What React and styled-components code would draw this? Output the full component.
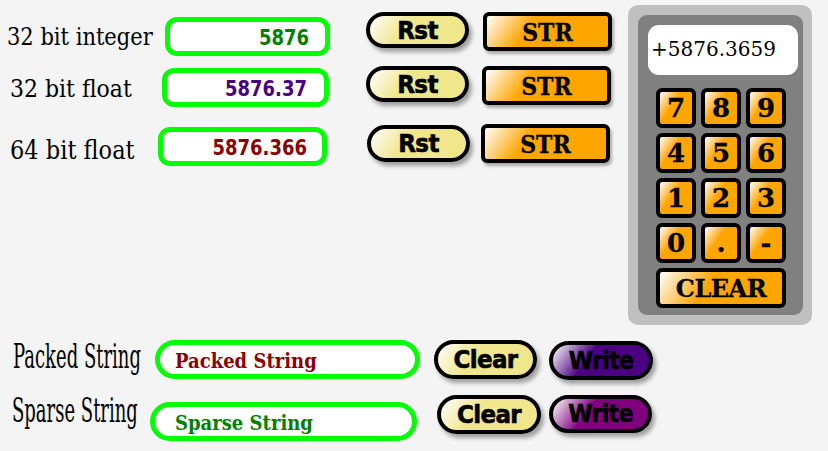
import React from 'react'
import styled, { createGlobalStyle } from 'styled-components'

const GlobalStyle = createGlobalStyle`
  html, body {
    margin: 0;
    padding: 0;
    background: #f4f4f4;
  }
  body {
    width: 828px;
    height: 451px;
    overflow: hidden;
    font-family: 'DejaVu Serif', serif;
  }
`

const Page = styled.div`
  display: flex;
  flex-direction: column;
`

const Top = styled.div`
  display: flex;
  height: 325px;
`

const Converters = styled.div`
  width: 628px;
  display: flex;
  flex-direction: column;
`

const Row = styled.div`
  display: flex;
  align-items: flex-start;
  margin-top: ${p => p.$mt}px;
  height: ${p => p.$h}px;
`

// text drawn a little stretched, as in the original svg
const Stretch = styled.span`
  display: inline-block;
  transform: scale(${p => p.$sx || 1}, ${p => p.$sy || 1});
  transform-origin: ${p => p.$origin || 'center center'};
`

const Label = styled.div`
  box-sizing: border-box;
  width: ${p => p.$w}px;
  padding-left: ${p => p.$pl}px;
  margin-top: ${p => p.$mt || 0}px;
  font-family: 'DejaVu Serif', serif;
  font-size: ${p => p.$size}px;
  line-height: ${p => p.$size + 2}px;
  color: #000;
  white-space: nowrap;
`

const Field = styled.div`
  box-sizing: border-box;
  width: ${p => p.$w}px;
  height: 39px;
  margin-top: ${p => p.$mt || 0}px;
  border: 5px solid #00ff00;
  border-radius: ${p => p.$radius || 12}px;
  background: #fff;
  display: flex;
  align-items: center;
  justify-content: ${p => (p.$left ? 'flex-start' : 'flex-end')};
  padding: ${p => (p.$left ? `2px 0 0 ${p.$pl}px` : `2px ${p.$pr}px 0 0`)};
  font-family: ${p => (p.$serif ? "'DejaVu Serif', serif" : "'DejaVu Sans', sans-serif")};
  font-weight: bold;
  font-size: 18px;
  color: ${p => p.$color};
  white-space: nowrap;
`

const PillButton = styled.div`
  box-sizing: border-box;
  width: ${p => p.$w || 103}px;
  height: ${p => p.$h || 36}px;
  margin-left: ${p => p.$ml}px;
  margin-top: ${p => p.$mt || 0}px;
  border: 4px solid #000;
  border-radius: 20px;
  background: linear-gradient(125deg, #ffffff 0%, ${p => p.$bg} 38%, ${p => p.$bg} 100%);
  box-shadow: 3px 4px 4px rgba(0, 0, 0, 0.35);
  display: flex;
  align-items: center;
  justify-content: center;
  font-family: 'DejaVu Sans', sans-serif;
  font-weight: bold;
  font-size: ${p => p.$fs || 23}px;
  letter-spacing: -0.6px;
  -webkit-text-stroke: 0.6px #000;
  color: #000;
  padding-bottom: 1px;
`

const StrButton = styled.div`
  box-sizing: border-box;
  width: 129px;
  height: 39px;
  margin-left: ${p => p.$ml}px;
  border: 4px solid #000;
  border-radius: 6px;
  background: linear-gradient(125deg, #ffffff 0%, #ffa500 35%, #ffa500 100%);
  box-shadow: 2px 3px 3px rgba(0, 0, 0, 0.3);
  display: flex;
  align-items: center;
  justify-content: center;
  font-family: 'DejaVu Serif', serif;
  font-weight: bold;
  font-size: 22px;
  -webkit-text-stroke: 0.3px #000;
  color: #000;
`

const Calculator = styled.div`
  box-sizing: border-box;
  margin-top: 5px;
  width: 184px;
  height: 320px;
  padding: 10px;
  background: #c0c0c0;
  border-radius: 10px;
`

const CalcBody = styled.div`
  box-sizing: border-box;
  width: 165px;
  height: 300px;
  background: #808080;
  border-radius: 9px;
  padding: 10px 0 0 10px;
  display: flex;
  flex-direction: column;
`

const Display = styled.div`
  box-sizing: border-box;
  width: 150px;
  height: 50px;
  background: #fff;
  border-radius: 11px;
  padding: 12px 0 0 3px;
  font-family: 'DejaVu Serif', serif;
  font-size: 20px;
  line-height: 24px;
  color: #000;
`

const Keypad = styled.div`
  display: grid;
  grid-template-columns: repeat(3, 40px);
  grid-auto-rows: 40px;
  gap: 5px;
  margin: 13px 0 0 8px;
`

const Key = styled.div`
  box-sizing: border-box;
  grid-column: ${p => (p.$wide ? '1 / span 3' : 'auto')};
  border: 4px solid #000;
  border-radius: 6px;
  background: linear-gradient(125deg, #ffffff 0%, #ffa500 40%, #ffa500 100%);
  display: flex;
  align-items: center;
  justify-content: center;
  font-family: 'DejaVu Serif', serif;
  font-weight: bold;
  font-size: ${p => (p.$wide ? 24 : 26)}px;
  letter-spacing: ${p => (p.$wide ? '-0.5px' : '0')};
  -webkit-text-stroke: 0.3px #000;
  color: #000;
`

const Bottom = styled.div`
  display: flex;
  flex-direction: column;
  margin-top: 15px;
`

const keys = ['7', '8', '9', '4', '5', '6', '1', '2', '3', '0', '.', '-']

const App = () => {
  return (
    <Page>
      <GlobalStyle />
      <Top>
        <Converters>
          <Row $mt={12} $h={45}>
            <Label $w={165} $pl={7} $mt={14} $size={21}>
              <Stretch $sy={1.12}>32 bit integer</Stretch>
            </Label>
            <Field $w={165} $mt={5} $pr={16} $color="#007f00">
              <Stretch $sy={1.2}>5876</Stretch>
            </Field>
            <PillButton $ml={36} $bg="#f0e68c">
              <Stretch $sy={1.1}>Rst</Stretch>
            </PillButton>
            <StrButton $ml={14}>
              <Stretch $sy={1.12}>STR</Stretch>
            </StrButton>
          </Row>
          <Row $mt={9} $h={41}>
            <Label $w={162} $pl={10} $mt={11} $size={22}>
              <Stretch $sy={1.1}>32 bit float</Stretch>
            </Label>
            <Field $w={167} $mt={2} $pr={17} $color="#4b0082">
              <Stretch $sy={1.2}>5876.37</Stretch>
            </Field>
            <PillButton $ml={37} $bg="#f0e68c">
              <Stretch $sy={1.1}>Rst</Stretch>
            </PillButton>
            <StrButton $ml={13}>
              <Stretch $sy={1.12}>STR</Stretch>
            </StrButton>
          </Row>
          <Row $mt={17} $h={42}>
            <Label $w={158} $pl={10} $mt={13} $size={25}>
              <Stretch $sx={0.9} $sy={1.05} $origin="left center">64 bit float</Stretch>
            </Label>
            <Field $w={169} $mt={3} $pr={15} $color="#8b0000">
              <Stretch $sy={1.2}>5876.366</Stretch>
            </Field>
            <PillButton $ml={40} $mt={1} $h={37} $bg="#f0e68c">
              <Stretch $sy={1.1}>Rst</Stretch>
            </PillButton>
            <StrButton $ml={11}>
              <Stretch $sy={1.12}>STR</Stretch>
            </StrButton>
          </Row>
        </Converters>
        <Calculator>
          <CalcBody>
            <Display>+5876.3659</Display>
            <Keypad>
              {keys.map(k => (
                <Key key={k}>{k}</Key>
              ))}
              <Key $wide>CLEAR</Key>
            </Keypad>
          </CalcBody>
        </Calculator>
      </Top>
      <Bottom>
        <Row $mt={0} $h={45}>
          <Label $w={155} $pl={13} $mt={1} $size={30}>
            <Stretch $sx={0.6} $sy={1.1} $origin="left center">Packed String</Stretch>
          </Label>
          <Field $w={265} $radius={20} $left $serif $pl={15} $color="#8b0000">
            <Stretch $sy={1.1}>Packed String</Stretch>
          </Field>
          <PillButton $ml={14} $w={103} $h={39} $bg="#f0e68c">
            <Stretch $sy={1.1}>Clear</Stretch>
          </PillButton>
          <PillButton $ml={12} $w={104} $h={39} $mt={1} $fs={22} $bg="#4b0082">
            <Stretch $sy={1.1}>Write</Stretch>
          </PillButton>
        </Row>
        <Row $mt={10} $h={46}>
          <Label $w={150} $pl={12} $mt={0} $size={30}>
            <Stretch $sx={0.6} $sy={1.1} $origin="left center">Sparse String</Stretch>
          </Label>
          <Field $w={267} $mt={7} $radius={20} $left $serif $pl={20} $color="#008000">
            <Stretch $sy={1.1}>Sparse String</Stretch>
          </Field>
          <PillButton $ml={20} $w={104} $h={39} $bg="#f0e68c">
            <Stretch $sy={1.1}>Clear</Stretch>
          </PillButton>
          <PillButton $ml={8} $w={103} $h={38} $fs={22} $bg="#800080">
            <Stretch $sy={1.1}>Write</Stretch>
          </PillButton>
        </Row>
      </Bottom>
    </Page>
  )
}

export default App
